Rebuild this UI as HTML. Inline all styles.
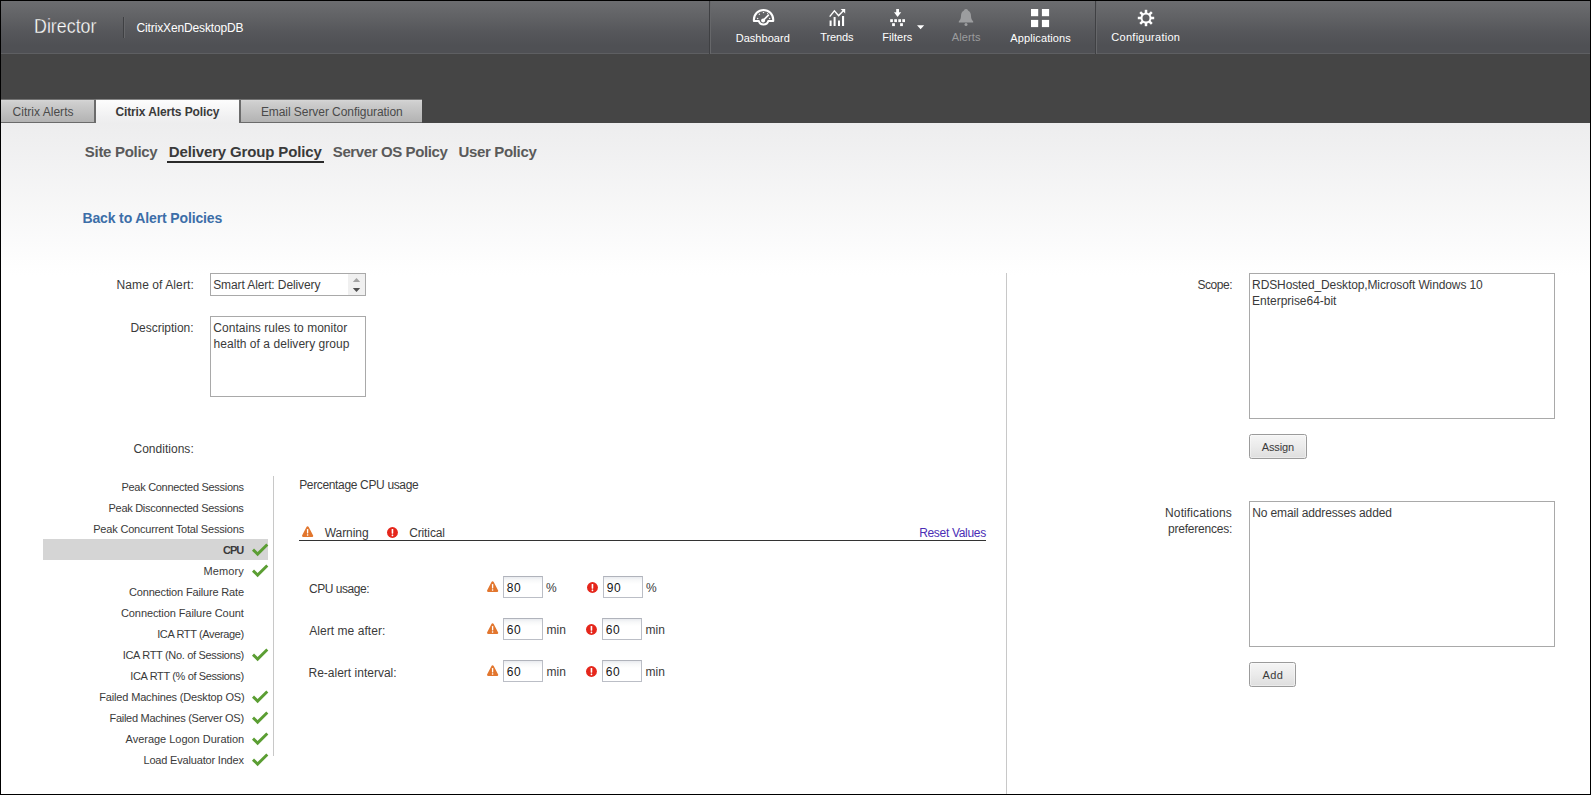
<!DOCTYPE html>
<html lang="en">
<head>
<meta charset="utf-8">
<title>Director - Citrix Alerts Policy</title>
<style>
html,body{margin:0;padding:0}
body{width:1591px;height:795px;overflow:hidden;position:relative;background:#fff;font-family:"Liberation Sans",sans-serif;font-size:12px;color:#3a3a3a}
#app{position:absolute;left:0;top:0;width:1591px;height:795px;overflow:hidden;background:#fff}
#app *{box-sizing:border-box}
#app div,#app svg,#app a,#app span,#app label,#app button,#app ul,#app li,#app h1,#app h2,#app header{position:absolute;margin:0;padding:0}
#app ul,#app li{list-style:none}
#app ul,#app header,#main,#fields,#detail,#legend,#side,.row,#nav li,#nav a,#subnav li{left:0;top:0}
.t{white-space:pre;line-height:1;color:#3a3a3a;text-decoration:none;font-family:"Liberation Sans",sans-serif;font-size:12px;font-weight:400}
#frame{left:0;top:0;width:1591px;height:795px;border:1px solid #000;z-index:50;pointer-events:none}
#hdr::before{content:"";position:absolute;left:1px;top:1px;width:1589px;height:52px;background:linear-gradient(#6c6d70 0,#616265 16px,#55565a 32px,#4f5054 44px,#4f5054 52px);box-shadow:0 1px 0 #5e5f62}
#logo{left:33.6px;top:15px;font-size:21px;color:#fff;transform-origin:0 0;transform:scaleX(.85);-webkit-text-stroke:.35px #5c5d60}
#band{left:1px;top:54px;width:1589px;height:69px;background:#454545}
.vsep{width:1px;background:#3f4043;box-shadow:1px 0 0 #66676a}
.tab{top:100px;height:23px;background:linear-gradient(#d6d6d6 0,#cfcfcf 2px,#b3b3b3 100%);border:0 solid #6b6b6b;border-bottom-width:1px;box-shadow:0 -1px 0 rgba(200,200,200,.35)}
.tab.on{background:linear-gradient(#fdfdfd,#f1f1f2 70%,#ededee);border:none;box-shadow:0 -1px 0 rgba(255,255,255,.35)}
#content{left:1px;top:123px;width:1589px;height:671px;background:linear-gradient(#ededee 0,#fff 152px)}
.uline{left:166.7px;top:161px;width:157.6px;height:2px;background:#2a2a2a}
.box{background:#fff;border:1px solid #a9a9a9}
.spin{left:137px;top:0;width:17px;height:21px;background:#f0f0f0}
#conds li{left:43px;width:225px;height:21px}
#conds li.sel{top:539px;background:#d5d5d5}
.vline{width:1px;background:#c8c8c8}
.hline{height:1px;background:#333}
.btn{border:1px solid #9b9b9b;border-radius:2.5px;background:linear-gradient(#f5f5f5,#ebebeb 50%,#dedede);box-shadow:inset 0 0 0 1px rgba(255,255,255,.4);font:inherit;color:inherit}
.num{width:40px;height:22px;background:linear-gradient(#e9ebef 0,#f7f8f9 3px,#fff 7px);border:1px solid #bbbec6;border-top-color:#b0b3bb}
</style>
</head>
<body>
<div id="app">
  <header id="hdr">
    <h1 class="t" id="logo">Director</h1>
    <div class="vsep" style="left:123px;top:17px;height:21px"></div>
    <span class="t" style="left:136.54px;top:22px;color:#fff;letter-spacing:-0.139px;">CitrixXenDesktopDB</span>
    <div class="vsep" style="left:709px;top:1px;height:53px"></div>
    <div class="vsep" style="left:1095px;top:1px;height:53px"></div>
    <ul id="nav">
      <li><a href="#"><svg style="left:751px;top:7px" width="26" height="22" viewBox="751 7 26 22"><path d="M753.9 21 L753.9 19.6 A9.65 9.65 0 0 1 773.2 19.6 L773.2 21 L768.3 21 A4.9 4.6 0 0 1 758.8 21 Z" fill="none" stroke="#fff" stroke-width="2.1" stroke-linejoin="round"/><path d="M763.2 20.3 L768.4 15.2" stroke="#fff" stroke-width="1.7" stroke-linecap="round" fill="none"/><circle cx="763.1" cy="20.4" r="2" fill="#fff"/><g fill="#fff" opacity=".9"><circle cx="757.6" cy="18.4" r=".75"/><circle cx="759.4" cy="14.3" r=".75"/><circle cx="763.5" cy="12.4" r=".75"/><circle cx="767.6" cy="13.6" r=".6"/><circle cx="769.6" cy="18.4" r=".75"/></g></svg><span class="t" style="left:735.67px;top:33px;font-size:11px;color:#fff;letter-spacing:0.035px;">Dashboard</span></a></li>
      <li><a href="#"><svg style="left:828px;top:7px" width="20" height="21" viewBox="828 7 20 21"><g fill="#fff"><rect x="829.6" y="20.5" width="2" height="5.5"/><rect x="833.6" y="17" width="2" height="9"/><rect x="838" y="20.5" width="2" height="5.5"/><rect x="842" y="16" width="2.1" height="10"/><path d="M840.6 8.9 L845.2 8.9 L845.2 13.5 Z"/></g><path d="M829.7 16.6 L834.4 10.8 L838.6 15.6 L843.6 10.4" fill="none" stroke="#fff" stroke-width="1.4"/></svg><span class="t" style="left:820.21px;top:32px;font-size:11px;color:#fff;letter-spacing:-0.118px;">Trends</span></a></li>
      <li><a href="#"><svg style="left:888px;top:7px" width="38" height="24" viewBox="888 7 38 24"><g fill="#fff"><path d="M896.2 8.9 H899 V12.3 H901.2 L897.6 17 L894 12.3 H896.2 Z"/><rect x="890.2" y="19.2" width="2.7" height="2.9"/><rect x="894.25" y="19.2" width="2.7" height="2.9"/><rect x="898.3" y="19.2" width="2.7" height="2.9"/><rect x="902.3" y="19.2" width="2.7" height="2.9"/><rect x="892.1" y="23.2" width="2.8" height="2.9"/><rect x="900.1" y="23.2" width="2.8" height="2.9"/><path d="M917 25.2 H924.2 L920.6 29.2 Z"/></g></svg><span class="t" style="left:882.21px;top:32px;font-size:11px;color:#fff;letter-spacing:0.034px;">Filters</span></a></li>
      <li><a href="#"><svg style="left:957px;top:7px" width="18" height="21" viewBox="957 7 18 21"><g fill="#9c9d9f"><path d="M966 8.9 C967.3 8.9 967.9 9.7 968 10.6 C970.3 11.6 970.9 13.6 971 16 C971.1 18.6 971.8 20 973.2 21.4 L973.2 22.5 L958.8 22.5 L958.8 21.4 C960.2 20 960.9 18.6 961 16 C961.1 13.6 961.7 11.6 964 10.6 C964.1 9.7 964.7 8.9 966 8.9 Z"/><circle cx="966" cy="24.5" r="1.5"/></g></svg><span class="t" style="left:951.77px;top:32px;font-size:11px;color:#9b9c9e;letter-spacing:0.128px;">Alerts</span></a></li>
      <li><a href="#"><svg style="left:1030px;top:8px" width="21" height="21" viewBox="1030 8 21 21"><g fill="#fff"><rect x="1031" y="9" width="7.2" height="7.2"/><rect x="1041.9" y="9" width="7.2" height="7.2"/><rect x="1031" y="19.9" width="7.2" height="7.2"/><rect x="1041.9" y="19.9" width="7.2" height="7.2"/></g></svg><span class="t" style="left:1010.37px;top:33px;font-size:11px;color:#fff;letter-spacing:0.102px;">Applications</span></a></li>
      <li><a href="#"><svg style="left:1136px;top:8px" width="20" height="20" viewBox="1136 8 20 20"><g transform="translate(1146 18)"><circle r="4.5" fill="none" stroke="#fff" stroke-width="2"/><rect x="-1.25" y="-8.2" width="2.5" height="3.2" fill="#fff" transform="rotate(0)"/><rect x="-1.25" y="-8.2" width="2.5" height="3.2" fill="#fff" transform="rotate(45)"/><rect x="-1.25" y="-8.2" width="2.5" height="3.2" fill="#fff" transform="rotate(90)"/><rect x="-1.25" y="-8.2" width="2.5" height="3.2" fill="#fff" transform="rotate(135)"/><rect x="-1.25" y="-8.2" width="2.5" height="3.2" fill="#fff" transform="rotate(180)"/><rect x="-1.25" y="-8.2" width="2.5" height="3.2" fill="#fff" transform="rotate(225)"/><rect x="-1.25" y="-8.2" width="2.5" height="3.2" fill="#fff" transform="rotate(270)"/><rect x="-1.25" y="-8.2" width="2.5" height="3.2" fill="#fff" transform="rotate(315)"/></g></svg><span class="t" style="left:1111.37px;top:32px;font-size:11px;color:#fff;letter-spacing:0.264px;">Configuration</span></a></li>
    </ul>
  </header>
  <div id="band"></div>
  <ul id="tabs">
    <li class="tab" style="left:1px;width:95px;border-right-width:2px"><a href="#" class="t" style="left:11.54px;top:6px;color:#4a4a4a;letter-spacing:0.025px;">Citrix Alerts</a></li>
    <li class="tab on" style="left:96px;width:143px"><a href="#" class="t" style="left:19.46px;top:6px;font-weight:700;letter-spacing:-0.124px;">Citrix Alerts Policy</a></li>
    <li class="tab" style="left:239px;width:183px;border-left-width:2px"><a href="#" class="t" style="left:19.88px;top:6px;color:#4a4a4a;letter-spacing:-0.062px;">Email Server Configuration</a></li>
  </ul>
  <div id="content"></div>
  <div id="main">
    <ul id="subnav">
      <li><a href="#" class="t" style="left:84.81px;top:144px;font-size:15px;font-weight:700;color:#5a5a5a;letter-spacing:-0.295px;">Site Policy</a></li>
      <li class="sel"><a href="#" class="t" style="left:168.87px;top:144px;font-size:15px;font-weight:700;letter-spacing:-0.151px;">Delivery Group Policy</a><div class="uline"></div></li>
      <li><a href="#" class="t" style="left:332.81px;top:144px;font-size:15px;font-weight:700;color:#5a5a5a;letter-spacing:-0.397px;">Server OS Policy</a></li>
      <li><a href="#" class="t" style="left:458.41px;top:144px;font-size:15px;font-weight:700;color:#5a5a5a;letter-spacing:-0.333px;">User Policy</a></li>
    </ul>
    <a href="#" class="t" style="left:82.41px;top:211px;font-size:14px;font-weight:700;color:#3c6ea8;letter-spacing:-0.133px;">Back to Alert Policies</a>
    <div id="fields">
      <label class="t" style="left:116.58px;top:279px;letter-spacing:0.085px;">Name of Alert:</label>
      <div class="box" style="left:210px;top:273px;width:156px;height:23px">
        <span class="t" style="left:2.20px;top:5px;letter-spacing:-0.106px;">Smart Alert: Delivery</span>
        <div class="spin"><svg style="left:0;top:0" width="17" height="21" viewBox="348 274 17 21"><path d="M352.8 282.1 L356.5 277.9 L360.2 282.1Z" fill="#a3a3a3"/><path d="M352.8 287.9 L356.5 292.1 L360.2 287.9Z" fill="#505050"/></svg></div>
      </div>
      <label class="t" style="left:130.48px;top:322px;letter-spacing:-0.029px;">Description:</label>
      <div class="box" style="left:210px;top:316px;width:156px;height:81px">
        <span class="t" style="left:2.34px;top:5px;letter-spacing:0.024px;">Contains rules to monitor</span>
        <span class="t" style="left:2.51px;top:21px;letter-spacing:0.049px;">health of a delivery group</span>
      </div>
      <label class="t" style="left:133.44px;top:443px;letter-spacing:0.025px;">Conditions:</label>
    </div>
    <ul id="conds">
      <li style="top:476px"><span class="t" style="left:78.51px;top:6px;font-size:11px;letter-spacing:-0.295px;">Peak Connected Sessions</span></li>
      <li style="top:497px"><span class="t" style="left:65.51px;top:6px;font-size:11px;letter-spacing:-0.285px;">Peak Disconnected Sessions</span></li>
      <li style="top:518px"><span class="t" style="left:50.21px;top:6px;font-size:11px;letter-spacing:-0.183px;">Peak Concurrent Total Sessions</span></li>
      <li class="sel" style="top:539px"><span class="t" style="left:179.99px;top:6px;font-size:11px;font-weight:700;letter-spacing:-1.001px;">CPU</span><svg class="ok" style="left:208px;top:4.4px" width="18" height="14" viewBox="0 0 18 14"><path d="M2 6.6 L6.6 11.1 L16.3 1.5" fill="none" stroke="#5b9e33" stroke-width="2.9"/></svg></li>
      <li style="top:560px"><span class="t" style="left:160.49px;top:6px;font-size:11px;letter-spacing:0.105px;">Memory</span><svg class="ok" style="left:208px;top:4.4px" width="18" height="14" viewBox="0 0 18 14"><path d="M2 6.6 L6.6 11.1 L16.3 1.5" fill="none" stroke="#5b9e33" stroke-width="2.9"/></svg></li>
      <li style="top:581px"><span class="t" style="left:85.97px;top:6px;font-size:11px;letter-spacing:-0.163px;">Connection Failure Rate</span></li>
      <li style="top:602px"><span class="t" style="left:77.97px;top:6px;font-size:11px;letter-spacing:-0.085px;">Connection Failure Count</span></li>
      <li style="top:623px"><span class="t" style="left:114.15px;top:6px;font-size:11px;letter-spacing:-0.367px;">ICA RTT (Average)</span></li>
      <li style="top:644px"><span class="t" style="left:79.75px;top:6px;font-size:11px;letter-spacing:-0.319px;">ICA RTT (No. of Sessions)</span><svg class="ok" style="left:208px;top:4.4px" width="18" height="14" viewBox="0 0 18 14"><path d="M2 6.6 L6.6 11.1 L16.3 1.5" fill="none" stroke="#5b9e33" stroke-width="2.9"/></svg></li>
      <li style="top:665px"><span class="t" style="left:87.35px;top:6px;font-size:11px;letter-spacing:-0.367px;">ICA RTT (% of Sessions)</span></li>
      <li style="top:686px"><span class="t" style="left:56.31px;top:6px;font-size:11px;letter-spacing:-0.165px;">Failed Machines (Desktop OS)</span><svg class="ok" style="left:208px;top:4.4px" width="18" height="14" viewBox="0 0 18 14"><path d="M2 6.6 L6.6 11.1 L16.3 1.5" fill="none" stroke="#5b9e33" stroke-width="2.9"/></svg></li>
      <li style="top:707px"><span class="t" style="left:66.51px;top:6px;font-size:11px;letter-spacing:-0.278px;">Failed Machines (Server OS)</span><svg class="ok" style="left:208px;top:4.4px" width="18" height="14" viewBox="0 0 18 14"><path d="M2 6.6 L6.6 11.1 L16.3 1.5" fill="none" stroke="#5b9e33" stroke-width="2.9"/></svg></li>
      <li style="top:728px"><span class="t" style="left:82.57px;top:6px;font-size:11px;letter-spacing:-0.021px;">Average Logon Duration</span><svg class="ok" style="left:208px;top:4.4px" width="18" height="14" viewBox="0 0 18 14"><path d="M2 6.6 L6.6 11.1 L16.3 1.5" fill="none" stroke="#5b9e33" stroke-width="2.9"/></svg></li>
      <li style="top:749px"><span class="t" style="left:100.47px;top:6px;font-size:11px;letter-spacing:-0.181px;">Load Evaluator Index</span><svg class="ok" style="left:208px;top:4.4px" width="18" height="14" viewBox="0 0 18 14"><path d="M2 6.6 L6.6 11.1 L16.3 1.5" fill="none" stroke="#5b9e33" stroke-width="2.9"/></svg></li>
    </ul>
    <div class="vline" style="left:273px;top:476px;height:280px"></div>
    <div id="detail">
      <h2 class="t" style="left:299.18px;top:479px;letter-spacing:-0.345px;">Percentage CPU usage</h2>
      <div id="legend">
        <svg class="warn" style="left:301.95px;top:525.85px" width="12" height="12" viewBox="0 0 12 12"><path d="M5.6 1.5 L9.9 9.8 L1.3 9.8 Z" fill="#e2762e" stroke="#e2762e" stroke-width="2.5" stroke-linejoin="round"/><rect x="4.95" y="3.1" width="1.3" height="4.3" rx=".4" fill="#fff"/><rect x="4.9" y="8.2" width="1.4" height="1.5" rx=".4" fill="#fff"/></svg><span class="t" style="left:324.72px;top:527px;letter-spacing:-0.061px;">Warning</span>
        <svg class="crit" style="left:387px;top:526.9px" width="12" height="12" viewBox="0 0 12 12"><circle cx="5.45" cy="5.5" r="5.45" fill="#e5261b"/><rect x="4.65" y="2.1" width="1.6" height="4.6" rx=".4" fill="#fff"/><rect x="4.65" y="7.6" width="1.6" height="1.6" rx=".4" fill="#fff"/></svg><span class="t" style="left:409.14px;top:527px;letter-spacing:-0.115px;">Critical</span>
        <a href="#" class="t" style="left:919.18px;top:527px;color:#4a2db5;letter-spacing:-0.319px;">Reset Values</a>
        <div class="hline" style="left:299px;top:540px;width:687px"></div>
      </div>
      <div class="row">
        <label class="t" style="left:308.94px;top:583px;letter-spacing:-0.457px;">CPU usage:</label>
        <svg class="warn" style="left:486.95px;top:580.9px" width="12" height="12" viewBox="0 0 12 12"><path d="M5.6 1.5 L9.9 9.8 L1.3 9.8 Z" fill="#e2762e" stroke="#e2762e" stroke-width="2.5" stroke-linejoin="round"/><rect x="4.95" y="3.1" width="1.3" height="4.3" rx=".4" fill="#fff"/><rect x="4.9" y="8.2" width="1.4" height="1.5" rx=".4" fill="#fff"/></svg><div class="num" style="left:503px;top:576px"><span class="t" style="left:2.80px;top:5px;color:#151515;letter-spacing:0.624px;">80</span></div><span class="t" style="left:546.07px;top:582px;">%</span>
        <svg class="crit" style="left:587.1px;top:581.9px" width="12" height="12" viewBox="0 0 12 12"><circle cx="5.45" cy="5.5" r="5.45" fill="#e5261b"/><rect x="4.65" y="2.1" width="1.6" height="4.6" rx=".4" fill="#fff"/><rect x="4.65" y="7.6" width="1.6" height="1.6" rx=".4" fill="#fff"/></svg><div class="num" style="left:603px;top:576px"><span class="t" style="left:2.74px;top:5px;color:#151515;letter-spacing:0.686px;">90</span></div><span class="t" style="left:646.07px;top:582px;">%</span>
      </div>
      <div class="row">
        <label class="t" style="left:309.28px;top:625px;letter-spacing:0.049px;">Alert me after:</label>
        <svg class="warn" style="left:486.95px;top:622.9px" width="12" height="12" viewBox="0 0 12 12"><path d="M5.6 1.5 L9.9 9.8 L1.3 9.8 Z" fill="#e2762e" stroke="#e2762e" stroke-width="2.5" stroke-linejoin="round"/><rect x="4.95" y="3.1" width="1.3" height="4.3" rx=".4" fill="#fff"/><rect x="4.9" y="8.2" width="1.4" height="1.5" rx=".4" fill="#fff"/></svg><div class="num" style="left:503px;top:618px"><span class="t" style="left:2.74px;top:5px;color:#151515;letter-spacing:0.686px;">60</span></div><span class="t" style="left:546.41px;top:624px;letter-spacing:0.111px;">min</span>
        <svg class="crit" style="left:586px;top:623.9px" width="12" height="12" viewBox="0 0 12 12"><circle cx="5.45" cy="5.5" r="5.45" fill="#e5261b"/><rect x="4.65" y="2.1" width="1.6" height="4.6" rx=".4" fill="#fff"/><rect x="4.65" y="7.6" width="1.6" height="1.6" rx=".4" fill="#fff"/></svg><div class="num" style="left:602px;top:618px"><span class="t" style="left:2.74px;top:5px;color:#151515;letter-spacing:0.686px;">60</span></div><span class="t" style="left:645.51px;top:624px;letter-spacing:0.011px;">min</span>
      </div>
      <div class="row">
        <label class="t" style="left:308.48px;top:667px;letter-spacing:0.006px;">Re-alert interval:</label>
        <svg class="warn" style="left:486.95px;top:664.9px" width="12" height="12" viewBox="0 0 12 12"><path d="M5.6 1.5 L9.9 9.8 L1.3 9.8 Z" fill="#e2762e" stroke="#e2762e" stroke-width="2.5" stroke-linejoin="round"/><rect x="4.95" y="3.1" width="1.3" height="4.3" rx=".4" fill="#fff"/><rect x="4.9" y="8.2" width="1.4" height="1.5" rx=".4" fill="#fff"/></svg><div class="num" style="left:503px;top:660px"><span class="t" style="left:2.74px;top:5px;color:#151515;letter-spacing:0.686px;">60</span></div><span class="t" style="left:546.41px;top:666px;letter-spacing:0.111px;">min</span>
        <svg class="crit" style="left:586px;top:665.9px" width="12" height="12" viewBox="0 0 12 12"><circle cx="5.45" cy="5.5" r="5.45" fill="#e5261b"/><rect x="4.65" y="2.1" width="1.6" height="4.6" rx=".4" fill="#fff"/><rect x="4.65" y="7.6" width="1.6" height="1.6" rx=".4" fill="#fff"/></svg><div class="num" style="left:602px;top:660px"><span class="t" style="left:2.74px;top:5px;color:#151515;letter-spacing:0.686px;">60</span></div><span class="t" style="left:645.51px;top:666px;letter-spacing:0.011px;">min</span>
      </div>
    </div>
    <div class="vline" style="left:1006px;top:273px;height:522px"></div>
    <div id="side">
      <label class="t" style="left:1197.40px;top:279px;letter-spacing:-0.427px;">Scope:</label>
      <div class="box" style="left:1249px;top:273px;width:306px;height:146px">
        <span class="t" style="left:2.08px;top:5px;letter-spacing:-0.11px;">RDSHosted_Desktop,Microsoft Windows 10</span>
        <span class="t" style="left:2.08px;top:21px;letter-spacing:-0.025px;">Enterprise64-bit</span>
      </div>
      <button class="btn" type="button" style="left:1249px;top:434px;width:58px;height:25px"><span class="t" style="left:11.77px;top:7px;font-size:11px;letter-spacing:-0.127px;">Assign</span></button>
      <label class="t" style="left:1165.08px;top:507px;letter-spacing:0.107px;">Notifications</label>
      <label class="t" style="left:1168.03px;top:523px;letter-spacing:-0.209px;">preferences:</label>
      <div class="box" style="left:1249px;top:501px;width:306px;height:146px">
        <span class="t" style="left:2.28px;top:5px;letter-spacing:-0.135px;">No email addresses added</span>
      </div>
      <button class="btn" type="button" style="left:1249px;top:662px;width:47px;height:25px"><span class="t" style="left:12.57px;top:7px;font-size:11px;letter-spacing:0.305px;">Add</span></button>
    </div>
  </div>
  <div id="frame"></div>
</div>
</body>
</html>
